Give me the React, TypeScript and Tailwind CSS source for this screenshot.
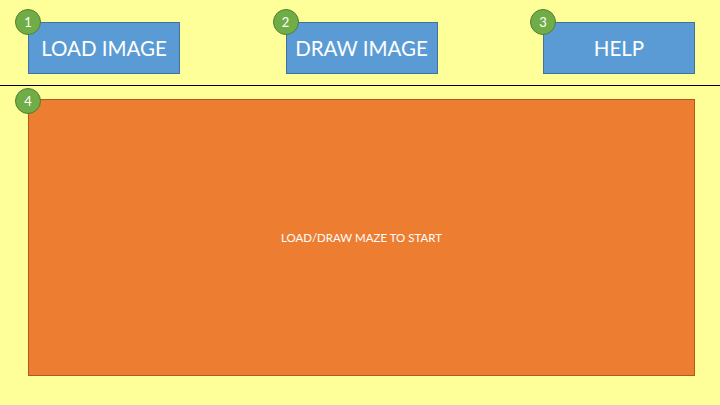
import React from "react";

function Badge({ n, className = "" }: { n: string; className?: string }) {
  return (
    <div
      className={`absolute w-[26px] h-[26px] rounded-full bg-[#70ad47] border border-[#507e32] text-white text-[13px] flex items-center justify-center leading-none ${className}`}
    >
      {n}
    </div>
  );
}

function Btn({ label, n }: { label: string; n: string }) {
  return (
    <div className="relative w-[152px] h-[52px] bg-[#5b9bd5] border border-[#41719c] flex items-center justify-center text-white text-[20.5px]">
      {label}
      <Badge n={n} className="-left-[14px] -top-[14px]" />
    </div>
  );
}

export default function App() {
  return (
    <div
      className="w-[720px] h-[405px] bg-[#ffff99] overflow-hidden flex flex-col"
      style={{ fontFamily: "Lato, 'Open Sans', sans-serif" }}
    >
      <div className="h-[85px] pt-[22px] pl-[28px] pr-[25px] flex justify-between items-start">
        <Btn label="LOAD IMAGE" n="1" />
        <Btn label="DRAW IMAGE" n="2" />
        <Btn label="HELP" n="3" />
      </div>
      <div className="h-px bg-black" />
      <div className="pt-[13px] pl-[28px]">
        <div className="relative w-[667px] h-[277px] bg-[#ed7d31] border border-[#ae5a21] flex items-center justify-center text-white text-[11.5px]">
          <span>LOAD/DRAW MAZE TO START</span>
          <Badge n="4" className="-left-[14px] -top-[12px]" />
        </div>
      </div>
    </div>
  );
}
